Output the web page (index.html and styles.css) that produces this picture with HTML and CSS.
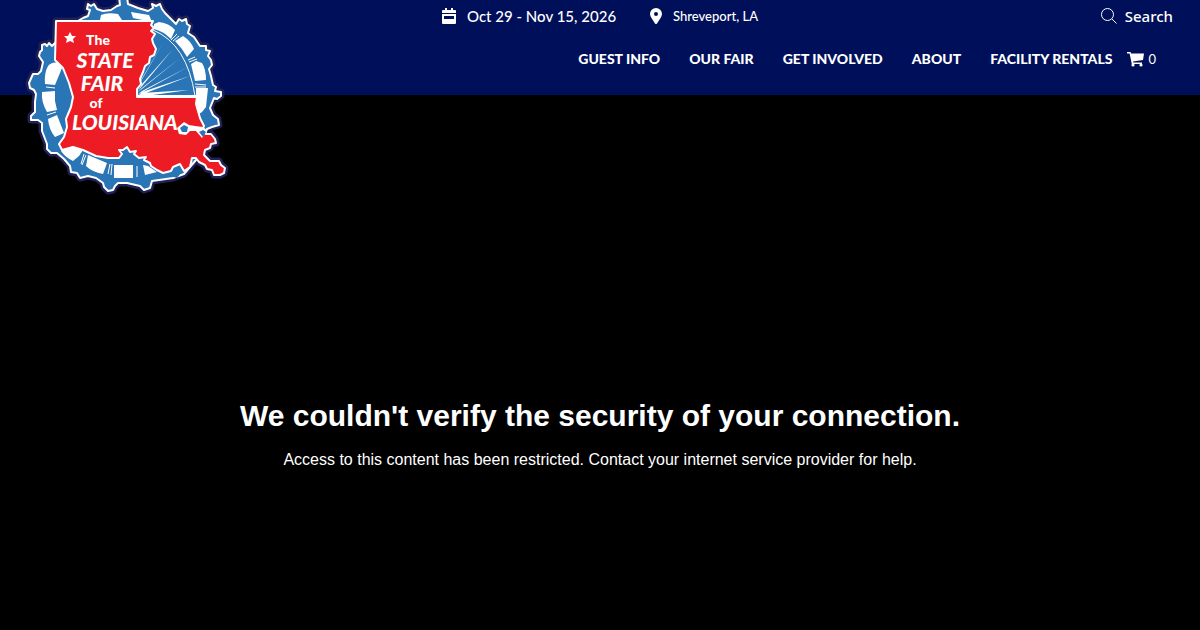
FILE: index.html
```html
<!DOCTYPE html>
<html lang="en">
<head>
    <meta charset="UTF-8">
    <meta name="viewport" content="width=device-width, initial-scale=1">
    <title>The State Fair of Louisiana</title>
    <link rel="stylesheet" href="styles.css">
</head>
<body>
    <header class="header">
        <a class="logo" href="#" aria-label="The State Fair of Louisiana">
            <svg viewBox="20 0 210 200">
                <defs>
                    <path id="wheel" d="M35 102L36 94L34 90L30 88L29 83L33 74L38 74L41 71L43 62L39 56L40 52L42 50L42 45L45 44L47 46L49 43L52 46L57 41L66 28L83 18L88 16L90 10L87 9L88 4L91 6L94 4L97 9L103 11L111 10L117 6L120 5L119 -3L127 -3L128 4L138 8L148 11L153 8L152 4L156 6L160 4L162 9L165 13L169 17L176 24L179 19L182 21L186 19L187 24L190 26L188 33L194 37L200 46L206 46L206 50L210 51L208 56L211 60L212 65L209 69L211 76L213 85L216 87L215 91L221 92L221 96L217 99L214 98L210 108L213 115L218 119L219 125L212 127L207 129L196 160L184 174L173 178L152 181L150 188L144 190L140 186L127 183L118 183L115 186L113 190L108 191L104 187L103 183L96 178L88 176L80 178L77 173L71 172L70 166L64 159L57 153L51 153L47 149L47 144L42 131L42 123L38 120L31 120L31 116L35 112Z"/>
                    <path id="state" d="M56 21H153L151 25L154 28L151 31L155 34L152 39L153 43L156 49L154 55L150 57L149 63L145 66L143 72L140 79L141 84L137 89V97H197L196 104L200 118L204 126L202 131L206 134L211 134L215 139L216 143L211 144L210 148L205 150L204 155L210 161L219 161L221 165L225 168L224 173L220 175H214L212 170L207 169L205 165L199 162L196 158H192L190 167L184 171L180 164L173 167L171 171L163 173L157 170L151 166L150 163L144 160L146 157L139 158L134 154L136 151L130 152L127 147L123 150L119 150L122 154L119 158L108 158L96 156L83 150L73 147L62 150L59 144L64 137L67 127L66 119L71 107L73 97L69 83L63 68L55 60Z"/>
                </defs>
                <g class="halo">
                    <use href="#wheel"/>
                    <use href="#state"/>
                </g>
                <use href="#wheel" class="wheel"/>
                <g class="cabins">
                    <path d="M48 66Q52 61 59 63L62 68L55 85L45 84Q44 73 48 66Z"/>
                    <path d="M42 92L55 91L55 101L57 110L47 112Q41 102 42 92Z"/>
                    <path d="M48 119L57 115L64 133L55 137Q49 130 48 119Z"/>
                    <path d="M61 151L72 147L83 150L79 156L73 161Q65 157 61 151Z"/>
                    <path d="M88 155L107 163L103 174Q92 172 86 166Z"/>
                    <path d="M114 165H133V178H114Z"/>
                    <path d="M143 165L148 166L157 172L145 175Z"/>
                    <path d="M101 15Q107 12 118 14L122 20H100Z"/>
                    <path d="M131 12L149 15L152 22L133 18Z"/>
                    <path d="M154 24L159 22Q169 23 175 30L171 39Q163 31 154 29Z"/>
                    <path d="M175 41L183 36Q191 41 194 49L187 57Q182 48 175 41Z"/>
                    <path d="M191 64L196 61L202 63Q206 69 206 80L195 81Z"/>
                    <path d="M196 88H208L206 107L202 112L199 114L196 101Z"/>
                </g>
                <g class="braces">
                    <path d="M47 115L56 112M46 87L55 88M110 164L108 174M112 164L111 175M84 154L81 164M86 155L82 165M137 166V177M153 30Q187 44 195 96M171 40L177 34M173 41L179 36M188 60L195 57M189 62L197 59M195 84L206 85M195 87L206 87"/>
                </g>
                <g class="spokes">
                    <path d="M137 88L163 43L141 80ZM138 91L173 49L142 84ZM137 93L180 58L142 88ZM137 95L188 67L142 91ZM138 96L190 76L142 92ZM138 97L189 90L142 93Z"/>
                    <path d="M137 95H197V97H137Z"/>
                </g>
                <use href="#state" class="state"/>
                <path class="cabins" d="M177 128L184 122L189 125L195 126L203 127L207 130L202 138L196 131L190 131L186 135L179 134Z"/>
                <path class="lake" d="M180 128L184 125L188 127L187 132L182 132Z"/>
                <path class="lake" d="M199 132L203 130L206 132L203 137Z"/>
                <path class="lake" d="M168 175L174 170L181 173L177 178Z"/>
                <path class="cabins" d="M70 32L72 36L76 36L73 39L74 43L70 41L66 43L67 39L64 36L68 36Z"/>
                <g class="logo-text">
                    <text x="98" y="45" class="logo-small">The</text>
                    <text x="105" y="68">STATE</text>
                    <text x="102" y="91">FAIR</text>
                    <text x="96" y="108" class="logo-small">of</text>
                    <text x="125" y="130">LOUISIANA</text>
                </g>
            </svg>
        </a>
        <div class="topbar">
            <div class="event">
                <span class="event-item">
                    <svg class="icon-date" viewBox="0 0 14 16" aria-hidden="true">
                        <path fill="currentColor" fill-rule="evenodd" d="M3 0h2v2h4V0h2v2h2q1 0 1 1v2H0V3q0-1 1-1h2zM0 6h14v9q0 1-1 1H1q-1 0-1-1zM2 8v3h10V8z"/>
                    </svg>
                    Oct 29 - Nov 15, 2026
                </span>
                <span class="event-item">
                    <svg class="icon-pin" viewBox="0 0 12 16" aria-hidden="true">
                        <path fill="currentColor" fill-rule="evenodd" d="M6 0a6 6 0 0 1 6 6c0 3-3 6-5 9.500q-1 1-2 0C3 12 0 9 0 6a6 6 0 0 1 6-6zm0 4a2 2 0 1 0 0 4 2 2 0 0 0 0-4z"/>
                    </svg>
                    <span class="place">Shreveport, LA</span>
                </span>
            </div>
            <button class="search" type="button">
                <svg class="icon-search" viewBox="0 0 16 16" aria-hidden="true">
                    <circle cx="6.500" cy="6.500" r="6"/>
                    <path d="M11 11L15.500 15.500"/>
                </svg>
                Search
            </button>
        </div>
        <nav class="nav">
            <a href="#">GUEST INFO</a>
            <a href="#">OUR FAIR</a>
            <a href="#">GET INVOLVED</a>
            <a href="#">ABOUT</a>
            <a href="#">FACILITY RENTALS</a>
            <a href="#" class="cart" aria-label="Cart, 0 items">
                <svg class="icon-cart" viewBox="0 0 17 16" aria-hidden="true">
                    <path fill="currentColor" d="M0 1h3.600l.4 1.500H17L16 9 6 10.500l.2 1H15V13H4.800L2.600 2.500H0z"/>
                    <circle cx="6" cy="14" r="1.600" fill="currentColor"/>
                    <circle cx="14" cy="14" r="1.600" fill="currentColor"/>
                </svg>
                <span class="cart-count">0</span>
            </a>
        </nav>
    </header>
    <main class="message">
        <h1>We couldn't verify the security of your connection.</h1>
        <p>Access to this content has been restricted. Contact your internet service provider for help.</p>
    </main>
</body>
</html>
```
FILE: styles.css
```css
body {
    margin: 0;
    background: #000;
    color: #fff;
    font-family: "Liberation Sans", Arial, sans-serif;
    font-size: 16px;
}

a {
    color: inherit;
    text-decoration: none;
}

.header {
    position: relative;
    background: #000f59;
    font-family: Lato, sans-serif;
    padding: 4px 27px 24px;
}

/* logo hangs over the bottom of the header */
.logo {
    position: absolute;
    left: 20px;
    top: 0;
    width: 210px;
}
.logo svg {
    display: block;
}
.halo {
    fill: #1f2157;
    stroke: #1f2157;
    stroke-width: 7px;
    stroke-linejoin: round;
}
.wheel,
.state {
    stroke: #fff;
    stroke-width: 2px;
    stroke-linejoin: round;
}
.wheel,
.lake {
    fill: #2a75b5;
}
.state {
    fill: #ed1c24;
}
.cabins,
.spokes {
    fill: #fff;
}
.braces {
    fill: none;
    stroke: #fff;
}
.logo-text {
    fill: #fff;
    font-family: Lato, sans-serif;
    font-size: 21px;
    font-style: italic;
    font-weight: 900;
    text-anchor: middle;
}
.logo-small {
    font-size: 14px;
    font-style: normal;
}

.topbar {
    display: grid;
    grid-template-columns: 1fr auto 1fr;
    align-items: center;
    line-height: 24px;
}
.event {
    grid-column: 2;
    display: flex;
    gap: 34px;
    font-size: 15px;
    font-weight: 500;
}
.event-item {
    display: flex;
    align-items: center;
    gap: 11px;
}
.icon-date {
    width: 14px;
}
.icon-pin {
    width: 12px;
}
.place {
    font-size: 13px;
}
.search {
    display: flex;
    align-items: center;
    justify-self: end;
    gap: 8px;
    padding: 0;
    border: 0;
    background: none;
    color: inherit;
    font: 500 15px/24px "Noto Sans", sans-serif;
    cursor: pointer;
}
.icon-search {
    width: 16px;
    fill: none;
    stroke: currentColor;
}

.nav {
    display: flex;
    justify-content: flex-end;
    gap: 29px;
    padding: 19px 17px 0 0;
    font-size: 14px;
    font-weight: 900;
    line-height: 24px;
}
.cart {
    display: flex;
    align-items: center;
    gap: 4px;
    margin-left: -14px;
}
.icon-cart {
    width: 17px;
}
.cart-count {
    font-size: 13px;
    font-weight: 400;
}

.message {
    padding: 301px 20px 0;
    text-align: center;
}
.message h1 {
    margin: 0;
    font-size: 30px;
    line-height: 40px;
}
.message p {
    margin: 12px 0;
    line-height: 24px;
}
```
